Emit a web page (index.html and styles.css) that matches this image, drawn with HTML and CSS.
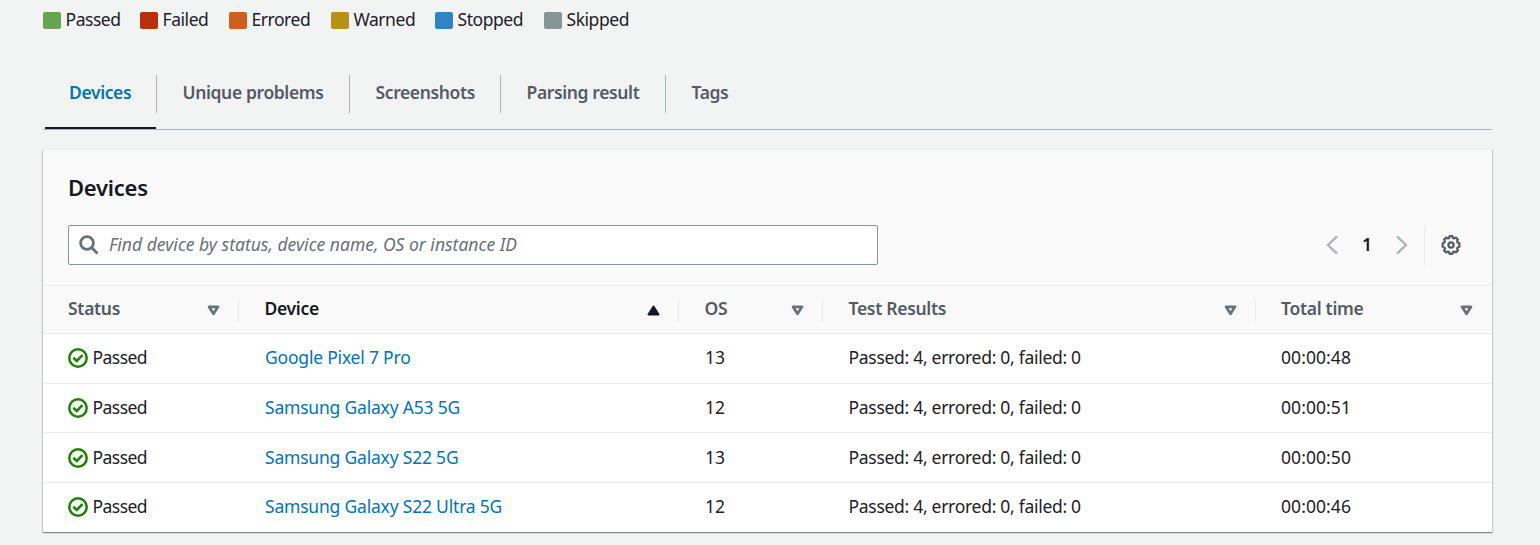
FILE: index.html
```
<!DOCTYPE html>
<html lang="en">
<head>
<meta charset="utf-8">
<title>Devices</title>
<link rel="stylesheet" href="styles.css">
</head>
<body>
<svg width="0" height="0" class="defs">
  <symbol id="check" viewBox="0 0 20 20"><circle cx="10" cy="10" r="8.7" fill="none" stroke="currentColor" stroke-width="2.5"/><path d="M5.4 9.8 8.8 13l5.7-5.8" fill="none" stroke="currentColor" stroke-width="2.6"/></symbol>
  <symbol id="down" viewBox="0 0 13 11"><path d="M2 1.8h9L6.5 8.8z" fill="none" stroke="currentColor" stroke-width="2.7" stroke-linejoin="round"/></symbol>
  <symbol id="up" viewBox="0 0 13 11"><path d="M1.5 9.5h10L6.5 1.5z" fill="currentColor" stroke="currentColor" stroke-width="2" stroke-linejoin="round"/></symbol>
</svg>
<main class="page">
  <ul class="legend">
    <li><i class="swatch passed"></i>Passed</li>
    <li><i class="swatch failed"></i>Failed</li>
    <li><i class="swatch errored"></i>Errored</li>
    <li><i class="swatch warned"></i>Warned</li>
    <li><i class="swatch stopped"></i>Stopped</li>
    <li><i class="swatch skipped"></i>Skipped</li>
  </ul>
  <nav class="tabs">
    <a class="tab t1 active"><span>Devices</span></a>
    <a class="tab t2"><span>Unique problems</span></a>
    <a class="tab t3"><span>Screenshots</span></a>
    <a class="tab t4"><span>Parsing result</span></a>
    <a class="tab"><span>Tags</span></a>
  </nav>
  <section class="card">
    <header class="card-header">
      <h2>Devices</h2>
      <div class="tools">
        <div class="search">
          <svg width="20" height="20" viewBox="0 0 20 20" fill="none" stroke="#687078" stroke-width="2.8"><circle cx="8" cy="8" r="6.4"/><path d="m12.5 12.5 6 6"/></svg>
          <span>Find device by status, device name, OS or instance ID</span>
        </div>
        <div class="pager">
          <svg class="arrow" width="12" height="20" viewBox="0 0 12 20"><path d="M11 1.3 2 10l9 8.7"/></svg>
          <b>1</b>
          <svg class="arrow" width="12" height="20" viewBox="0 0 12 20"><path d="m1 1.3 9 8.7-9 8.7"/></svg>
        </div>
        <div class="settings">
          <svg width="20" height="20" viewBox="0 0 20 20" fill="none" stroke="#545b64" stroke-width="2.2" stroke-linejoin="round"><path d="M8.6 1.1h2.8l.7 1.9 1 .4 1.8-.8 2 2-.8 1.8.4 1 1.9.8v3.6l-1.9.8-.4 1 .8 1.8-2 2-1.8-.8-1 .4-.7 1.9H8.6L7.900 17l-1-.4-1.800.8-2-2 .8-1.800-.4-1-1.900-.8V8.200l1.900-.8.4-1-.8-1.800 2-2 1.800.8 1-.4z"/><circle cx="10" cy="10" r="2.600"/></svg>
        </div>
      </div>
    </header>
    <div class="row head">
      <div>Status<svg><use href="#down"/></svg></div>
      <div class="sorted">Device<svg><use href="#up"/></svg></div>
      <div>OS<svg><use href="#down"/></svg></div>
      <div>Test Results<svg><use href="#down"/></svg></div>
      <div>Total time<svg><use href="#down"/></svg></div>
    </div>
    <div class="row"><div class="status"><svg><use href="#check"/></svg>Passed</div><a>Google Pixel 7 Pro</a><div>13</div><div class="results">Passed: 4, errored: 0, failed: 0</div><div class="time">00:00:48</div></div>
    <div class="row"><div class="status"><svg><use href="#check"/></svg>Passed</div><a>Samsung Galaxy A53 5G</a><div>12</div><div class="results">Passed: 4, errored: 0, failed: 0</div><div class="time">00:00:51</div></div>
    <div class="row"><div class="status"><svg><use href="#check"/></svg>Passed</div><a>Samsung Galaxy S22 5G</a><div>13</div><div class="results">Passed: 4, errored: 0, failed: 0</div><div class="time">00:00:50</div></div>
    <div class="row"><div class="status"><svg><use href="#check"/></svg>Passed</div><a>Samsung Galaxy S22 Ultra 5G</a><div>12</div><div class="results">Passed: 4, errored: 0, failed: 0</div><div class="time">00:00:46</div></div>
  </section>
</main>
</body>
</html>
```
FILE: styles.css
```
* { box-sizing: border-box; }
body {
  margin: 0;
  height: 545px;
  overflow: hidden;
  background: #f2f4f4;
  color: #1d2026;
  font: 17.5px/26px "Noto Sans", "Open Sans", sans-serif;
}
.defs { display: block; height: 0; }
.page { width: 1449px; margin-left: 43px; }
.legend {
  display: flex;
  margin: 0;
  padding: 6px 0 0;
  list-style: none;
  letter-spacing: -0.45px;
}
.legend li { display: flex; align-items: center; width: 97px; }
.legend li:nth-child(2) { width: 89px; }
.legend li:nth-child(3) { width: 102px; }
.legend li:nth-child(4) { width: 104px; }
.legend li:nth-child(5) { width: 109px; }
.swatch { width: 18px; height: 17px; margin: 3px 4.500px 0 0; border-radius: 2px; }
.passed { background: #67a353; }
.failed { background: #ba2e0f; }
.errored { background: #cc5f21; }
.warned { background: #b59216; }
.stopped { background: #3184c2; }
.skipped { background: #879596; }

.tabs {
  display: flex;
  height: 55px;
  margin-top: 43px;
  border-bottom: 1px solid #aab7b8;
  color: #545b64;
  font-weight: 600;
  letter-spacing: -0.38px;
}
.tab { height: 54px; }
.tab span { display: block; height: 38px; padding: 4px 0 0 25.500px; border-right: 1px solid #aab7b8; }
.t1 { width: 112px; margin-left: 2px; }
.tab.t1 span { padding-left: 24px; }
.t2 { width: 193px; }
.t3 { width: 151px; }
.t4 { width: 165px; }
.tab:last-child span { border: 0; }
.active { color: #0073bb; background: linear-gradient(#16191f, #16191f) 0 100% / 111px 2px no-repeat; }

.card {
  height: 383px;
  margin-top: 19px;
  background: #fff;
  border-top: 1px solid #eaeded;
  box-shadow: 0 1px 1px 0 rgba(0, 28, 36, .3), 1px 1px 1px 0 rgba(0, 28, 36, .15), -1px 1px 1px 0 rgba(0, 28, 36, .15);
}
.card-header { height: 136px; padding: 22px 25px 0; background: #fafafa; border-bottom: 1px solid #eaeded; }
h2 { margin: 0; font-size: 22px; line-height: 30px; font-weight: 600; letter-spacing: -0.25px; color: #16191f; }
.tools { display: flex; margin-top: 23px; align-items: center; height: 40px; }
.search {
  display: flex;
  align-items: center;
  width: 810px;
  height: 40px;
  padding-left: 10px;
  gap: 10px;
  border: 1px solid #879596;
  border-radius: 2px;
  background: #fff;
  color: #687078;
  font-style: italic;
}
.search span, .pager b { padding-bottom: 2px; }
.pager { display: flex; align-items: center; width: 82px; justify-content: space-between; margin-left: auto; }
.pager b { font-weight: 600; color: #16191f; }
.arrow { fill: none; stroke: #aab7b8; stroke-width: 2.4; }
.settings { display: flex; align-items: center; width: 43px; height: 39px; margin-left: 16px; padding-left: 16px; border-left: 1px solid #eaeded; }

.row {
  display: grid;
  grid-template-columns: 196px 440px 144px 433px 1fr;
  height: 49.65px;
  padding-bottom: 2px;
  align-items: center;
  border-bottom: 1px solid #eaeded;
}
.row > * { padding-left: 26px; }
.row:last-child { border-bottom: 0; padding-bottom: 4px; }
.row a { color: #0073bb; letter-spacing: -0.2px; }
.row .results { padding-left: 25.500px; letter-spacing: -0.29px; }
.row .time { padding-left: 25px; letter-spacing: 0.07px; }
.row .status { display: flex; align-items: center; padding-left: 25px; letter-spacing: -0.55px; }
.status svg { width: 20px; height: 20px; margin: 2px 4.500px 0 0; color: #1d8102; }
.row > :first-child { padding-left: 25px; }
.row.head { height: 48px; padding-bottom: 0; background: #fafafa; color: #545b64; font-weight: 600; letter-spacing: -0.3px; }
.head > div { display: flex; align-items: center; justify-content: space-between; height: 22px; padding: 0 18px 3px 25.500px; border-right: 1px solid #eaeded; }
.head > div:last-child { border: 0; padding-left: 25px; padding-right: 19px; }
.head svg { width: 13px; height: 11px; margin-top: 4px; color: #687078; }
.head .sorted, .head .sorted svg { color: #16191f; }
```
